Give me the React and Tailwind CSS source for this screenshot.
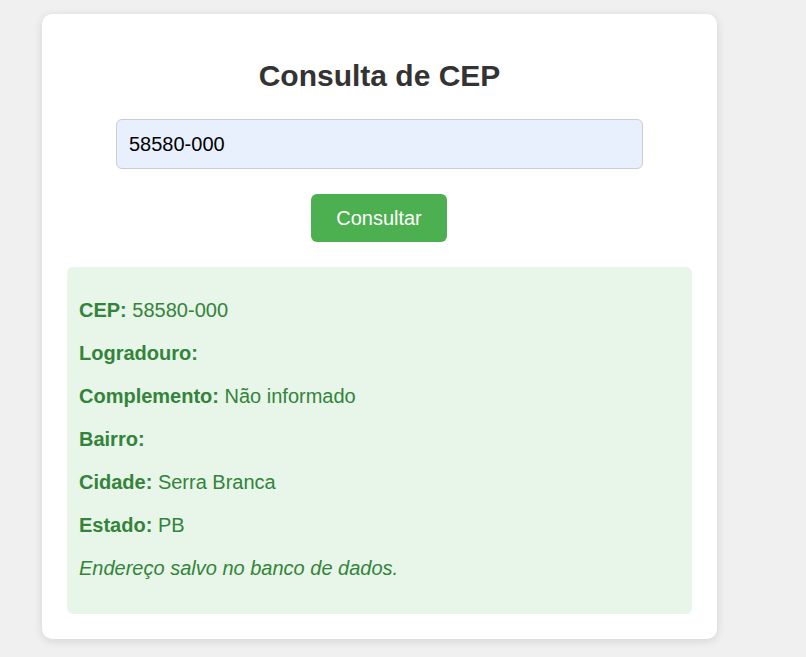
export default function App() {
  return (
    <div className="min-h-screen w-full bg-[#f0f0f0] pt-[14px] pb-[19px]" style={{ fontFamily: '"Liberation Sans", Arial, sans-serif' }}>
      <div className="ml-[42px] w-[675px] rounded-[10px] bg-white p-[25px] shadow-[0_2px_10px_rgba(0,0,0,0.12)]">
        <h2 className="mt-[20px] mb-[26px] text-center text-[30px] font-bold leading-[34px] text-[#333]">Consulta de CEP</h2>
        <div className="flex justify-center">
          <input
            type="text"
            defaultValue="58580-000"
            className="h-[50px] w-[527px] rounded-[6px] border border-[#ccc] bg-[#e8f0fe] px-[12px] text-[20px] text-black outline-none"
          />
        </div>
        <div className="mt-[25px] flex justify-start pl-[244px]">
          <button className="h-[48px] w-[136px] rounded-[6px] bg-[#4caf50] text-[20px] text-white">Consultar</button>
        </div>
        <div className="mt-[25px] rounded-[6px] bg-[#e8f5e9] px-[12px] pt-[32px] pb-[34px] text-[20px] leading-[23px] text-[#33843a]">
          <div className="flex flex-col gap-[20px]">
            <p><strong>CEP:</strong> 58580-000</p>
            <p><strong>Logradouro:</strong> </p>
            <p><strong>Complemento:</strong> Não informado</p>
            <p><strong>Bairro:</strong> </p>
            <p><strong>Cidade:</strong> Serra Branca</p>
            <p><strong>Estado:</strong> PB</p>
            <p><em>Endereço salvo no banco de dados.</em></p>
          </div>
        </div>
      </div>
    </div>
  );
}
